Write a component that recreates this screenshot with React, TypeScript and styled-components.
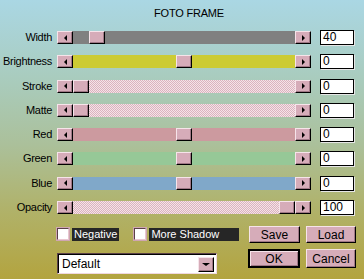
import styled, {createGlobalStyle, css} from "styled-components";

const GlobalStyle = createGlobalStyle`
    html, body {
        margin: 0;
        padding: 0;
    }
    body {
        font-family: "Liberation Sans", Arial, sans-serif;
        font-size: 11px;
        color: #000;
    }
`;

const Dialog = styled.div`
    width: 364px;
    height: 279px;
    box-sizing: border-box;
    padding-top: 6px;
    background: linear-gradient(180deg, #aad7e4 0%, #a9cbbb 30%, #abc09a 52%, #b0b26a 75%, #b3a43f 100%);
    overflow: hidden;
`;

const Title = styled.div`
    height: 14px;
    line-height: 14px;
    padding-left: 14px;
    text-align: center;
    letter-spacing: -0.2px;
`;

const Rows = styled.div`
    display: flex;
    flex-direction: column;
    gap: 9.3px;
    margin-top: 10px;
`;

const Row = styled.div`
    display: flex;
    align-items: center;
    height: 15px;
`;

const Label = styled.div`
    width: 52px;
    margin-right: 5px;
    text-align: right;
    line-height: 13px;
    letter-spacing: -0.3px;
`;

const raised = css`
    box-sizing: border-box;
    background: #d6acb9;
    border: 1px solid;
    border-color: #f6e4ea #000 #000 #f6e4ea;
    box-shadow: inset -1px -1px 0 #a07886;
`;

const Slider = styled.div`
    display: flex;
    width: 254px;
    height: 13px;
`;

const ArrowButton = styled.div`
    ${raised};
    width: 16px;
    height: 13px;
    display: flex;
    align-items: center;
    justify-content: center;
`;

const Arrow = styled.span<{ $dir: "left" | "right" | "down" }>`
    width: 0;
    height: 0;
    border-style: solid;
    ${({$dir}) =>
        $dir === "left"
            ? css`border-width: 3px 3px 3px 0; border-color: transparent #000 transparent transparent;`
            : $dir === "right"
            ? css`border-width: 3px 0 3px 3px; border-color: transparent transparent transparent #000;`
            : css`border-width: 3px 4px 0 4px; border-color: #000 transparent transparent transparent;`}
`;

const checker = css`
    background-color: #f4e4e8;
    background-image: repeating-conic-gradient(#dbb2be 0% 25%, transparent 0% 50%);
    background-size: 2px 2px;
`;

const Track = styled.div<{ $color?: string }>`
    position: relative;
    flex: 1;
    height: 13px;
    ${({$color}) => ($color ? css`background: ${$color};` : checker)}
`;

const Thumb = styled.div`
    ${raised};
    position: absolute;
    top: 0;
    width: 16px;
    height: 13px;
`;

const ValueBox = styled.div`
    box-sizing: border-box;
    width: 34px;
    height: 15px;
    margin-left: 9px;
    background: #fff;
    border: 1px solid #000;
    box-shadow: 1px 1px 0 #e6e6e6;
    padding-left: 2px;
    font-size: 12px;
    line-height: 13px;
`;

const Bottom = styled.div`
    display: flex;
    margin-top: 11px;
    padding: 0 8px 0 57px;
`;

const LeftCol = styled.div`
    display: flex;
    flex-direction: column;
    padding-top: 1px;
    gap: 12px;
`;

const CheckRow = styled.div`
    display: flex;
    align-items: center;
    gap: 15px;
    height: 14px;
`;

const CheckItem = styled.div`
    display: flex;
    align-items: center;
    gap: 3px;
`;

const Check = styled.div`
    box-sizing: border-box;
    width: 12px;
    height: 12px;
    background: #fff;
    border: 1px solid;
    border-color: #5a4048 #e8c6d0 #e8c6d0 #5a4048;
    box-shadow: 0 0 0 1px #cfa6b2;
`;

const CheckLabel = styled.div<{ $width?: number }>`
    box-sizing: border-box;
    height: 13px;
    line-height: 13px;
    padding: 0 2px;
    background: #262626;
    color: #fff;
    ${({$width}) => $width && css`width: ${$width}px;`}
`;

const Select = styled.div`
    box-sizing: border-box;
    width: 160px;
    height: 21px;
    display: flex;
    align-items: center;
    background: #fff;
    border: 1px solid;
    border-color: #5a4048 #f0d8e0 #f0d8e0 #5a4048;
    box-shadow: inset 1px 1px 0 #000;
    padding: 1px 2px 0 4px;
    font-size: 12px;
`;

const SelectText = styled.span`
    flex: 1;
`;

const SelectButton = styled.div`
    ${raised};
    width: 16px;
    height: 15px;
    display: flex;
    align-items: center;
    justify-content: center;
`;

const Buttons = styled.div`
    margin-left: auto;
    display: grid;
    grid-template-columns: 52px 50px;
    grid-template-rows: 17px 19px;
    gap: 6px;
`;

const Button = styled.div<{ $default?: boolean }>`
    ${raised};
    display: flex;
    align-items: center;
    justify-content: center;
    font-size: 12px;
    ${({$default}) =>
        $default &&
        css`
            border-width: 2px;
            border-color: #000;
            box-shadow: inset 1px 1px 0 #f6e4ea, inset -1px -1px 0 #a07886;
        `}
`;

const SaveButton = styled(Button)`
    justify-self: end;
    width: 51px;
`;

type SliderSpec = {
    label: string;
    value: number;
    min: number;
    max: number;
    color?: string;
};

const sliders: SliderSpec[] = [
    {label: "Width", value: 40, min: 0, max: 500, color: "#808080"},
    {label: "Brightness", value: 0, min: -100, max: 100, color: "#cccb33"},
    {label: "Stroke", value: 0, min: 0, max: 100},
    {label: "Matte", value: 0, min: 0, max: 100},
    {label: "Red", value: 0, min: -255, max: 255, color: "#cc9a9f"},
    {label: "Green", value: 0, min: -255, max: 255, color: "#96c897"},
    {label: "Blue", value: 0, min: -255, max: 255, color: "#80a8c9"},
    {label: "Opacity", value: 100, min: 0, max: 100},
];

const TRAVEL = 206;

export default function App() {
    return (
        <>
            <GlobalStyle/>
            <Dialog>
                <Title>FOTO FRAME</Title>
                <Rows>
                    {sliders.map((s) => (
                        <Row key={s.label}>
                            <Label>{s.label}</Label>
                            <Slider>
                                <ArrowButton><Arrow $dir="left"/></ArrowButton>
                                <Track $color={s.color}>
                                    <Thumb style={{left: Math.round(((s.value - s.min) / (s.max - s.min)) * TRAVEL)}}/>
                                </Track>
                                <ArrowButton><Arrow $dir="right"/></ArrowButton>
                            </Slider>
                            <ValueBox>{s.value}</ValueBox>
                        </Row>
                    ))}
                </Rows>
                <Bottom>
                    <LeftCol>
                        <CheckRow>
                            <CheckItem>
                                <Check/>
                                <CheckLabel>Negative</CheckLabel>
                            </CheckItem>
                            <CheckItem>
                                <Check/>
                                <CheckLabel $width={90}>More Shadow</CheckLabel>
                            </CheckItem>
                        </CheckRow>
                        <Select>
                            <SelectText>Default</SelectText>
                            <SelectButton><Arrow $dir="down"/></SelectButton>
                        </Select>
                    </LeftCol>
                    <Buttons>
                        <SaveButton>Save</SaveButton>
                        <Button>Load</Button>
                        <Button $default>OK</Button>
                        <Button>Cancel</Button>
                    </Buttons>
                </Bottom>
            </Dialog>
        </>
    );
}
